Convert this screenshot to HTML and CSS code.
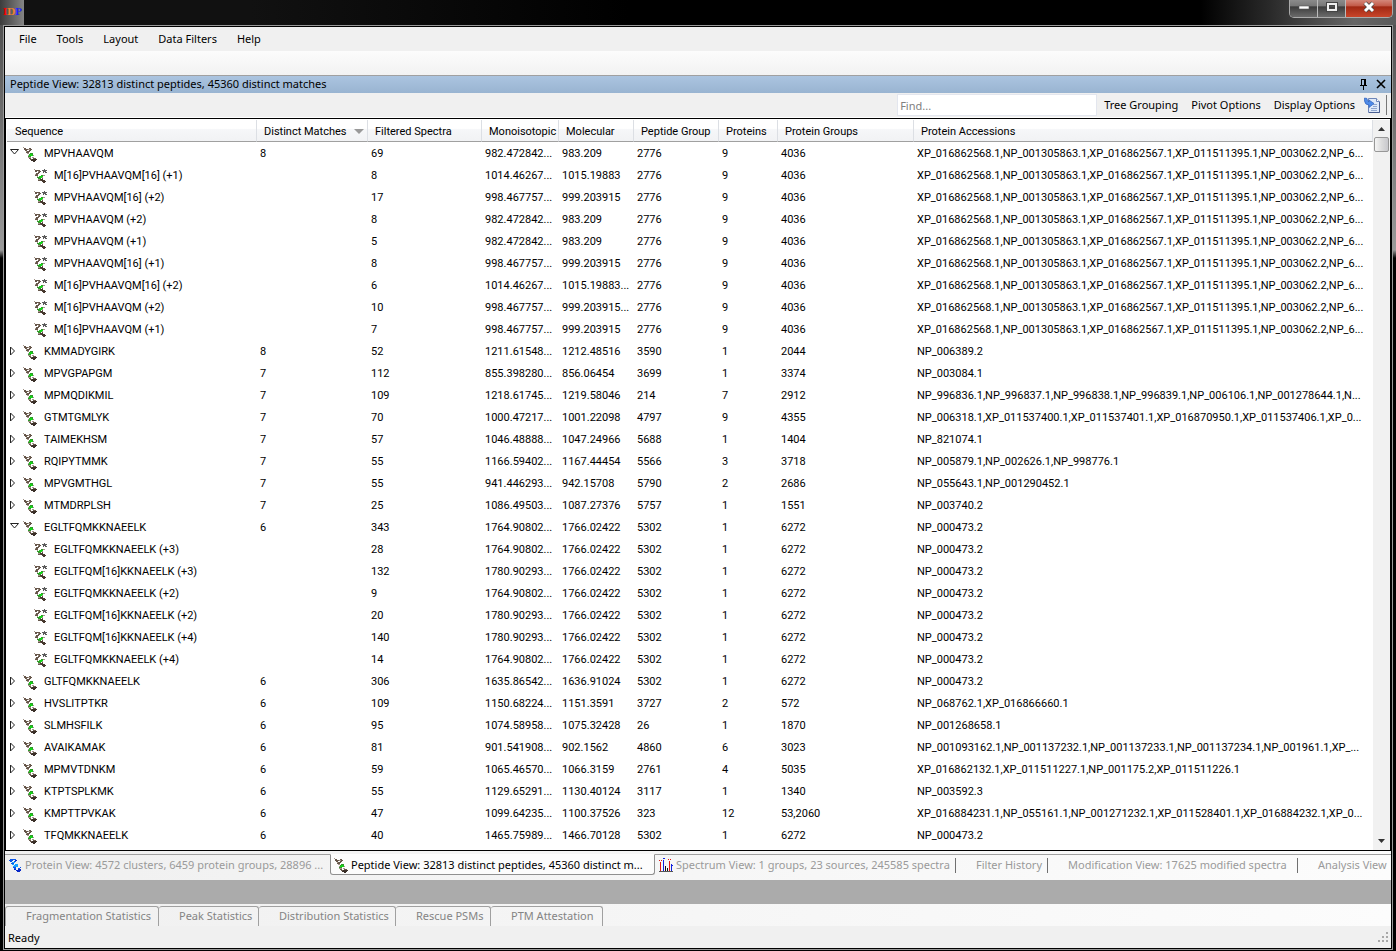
FILE: index.html
```
<!DOCTYPE html>
<html lang="en">
<head>
<meta charset="utf-8">
<title>IDPicker</title>
<link rel="stylesheet" href="styles.css">
</head>
<body>
<svg class="defs" aria-hidden="true">
  <symbol id="peptide" viewBox="0 0 15 16">
    <path d="M0 1.500h1M5 3.500h2M3 5.500h1M4 7.500h2M5 9.500h1M10 9.500h1M5 11.500h3M9 11.500h2" stroke="#a3968a"/>
    <path d="M1 2.500h2M6 2.500h2M1 3.500h4M7 3.500h2M2 4.500h2M6 4.500h2M4 5.500h3M3 6.500h3M6 12.500h2M10 12.500h3M7 13.500h2" stroke="#66564a"/>
    <path d="M7 7.500h3M6 8.500h4M5 10.500h3" stroke="#2f9a28"/>
    <path d="M7 8.500h2M6 9.500h4" stroke="#16d41a"/>
    <path d="M9 13.500h5M8 14.500h5M10 15.500h2" stroke="#3a2f28"/>
  </symbol>
  <symbol id="match" viewBox="0 0 16 16">
    <path d="M1 1.500h1M5 3.500h2M2 6.500h1M4 8.500h1M10 7.500h2M9 9.500h1M5 11.500h2" stroke="#a3968a"/>
    <path d="M2 2.500h5M2 3.500h2M6 3.500h2M5 4.500h2M3 5.500h3M2 7.500h3M3 6.500h2M5 12.500h3M9 10.500h1" stroke="#66564a"/>
    <path d="M8 7.500h2M4 9.500h3M5 10.500h3" stroke="#2f9a28"/>
    <path d="M6 8.500h4M7 9.500h2" stroke="#16d41a"/>
    <path d="M7 11.500h3M8 12.500h4M9 13.500h4M10 14.500h2" stroke="#46382e"/>
    <path d="M11 1.500h1M9 2.500h5M10 3.500h3M10 4.500h1M12 4.500h2" stroke="#5c5c5c"/>
  </symbol>
  <symbol id="protein" viewBox="0 0 15 16">
    <path d="M2 2.500h6M1 3.500h4M6 4.500h2M2 4.500h2M3 6.500h3M5 10.500h3M6 11.500h2M10 11.500h2M12 10.500h1" stroke="#0a55e8"/>
    <path d="M4 5.500h3M4 7.500h2M7 7.500h3M6 8.500h4M5 9.500h5" stroke="#18a0ff"/>
    <path d="M7 3.500h2M10 12.500h3M8 13.500h5M9 14.500h3M6 12.500h2" stroke="#0828c8"/>
  </symbol>
  <symbol id="spectrum" viewBox="0 0 15 16">
    <path d="M0 14.500h14" stroke="#555"/>
    <path d="M1.500 5v9M10.500 4v10" stroke="#e01818"/>
    <path d="M4.500 3v11M12.500 7v7" stroke="#1020e0"/>
    <path d="M6.500 9v5M8.500 11v3" stroke="#111"/>
    <path d="M0 3.500h3M9 2.500h3" stroke="#e01818" stroke-dasharray="1 1"/>
    <path d="M4 1.500h2M12 8.500h2" stroke="#1020e0"/>
  </symbol>
  <symbol id="open" viewBox="0 0 10 12">
    <path d="M.5 1.500h8L4.500 6z" fill="#fff" stroke="#222"/>
  </symbol>
  <symbol id="closed" viewBox="0 0 10 12">
    <path d="M.5 1v8L4.500 5z" fill="#fff" stroke="#222"/>
  </symbol>
</svg>

<div class="window">
  <header class="titlebar">
    <span class="logo"><b class="i">I</b><b class="d">D</b><b class="p">P</b></span>
    <div class="controls">
      <button class="control" aria-label="Minimize"><svg width="12" height="5"><rect x="1" y="1" width="10" height="3" fill="#fff" stroke="#555" stroke-width=".6"/></svg></button>
      <button class="control" aria-label="Restore"><svg width="12" height="10"><path d="M2 2h8v6H2z" fill="none" stroke="#444" stroke-width="4"/><path d="M2 2h8v6H2z" fill="none" stroke="#eee" stroke-width="2"/></svg></button>
      <button class="control close" aria-label="Close"><svg width="14" height="12"><path d="M3 2l8 8M11 2l-8 8" stroke="#444" stroke-width="4.500"/><path d="M3 2l8 8M11 2l-8 8" stroke="#fff" stroke-width="3"/></svg></button>
    </div>
  </header>

  <div class="client">
    <nav class="menubar">
      <button>File</button><button>Tools</button><button>Layout</button><button>Data Filters</button><button>Help</button>
    </nav>
    <div class="toolstrip"></div>

    <section class="pane">
      <div class="caption">
        <h1>Peptide View: 32813 distinct peptides, 45360 distinct matches</h1>
        <button aria-label="Auto hide"><svg width="9" height="12"><path d="M2.500 1v6M5.500 1v6M6.500 1v6M2 1.500h5M1 7.500h7M4.500 8v4" fill="none" stroke="#000"/></svg></button>
        <button aria-label="Close pane"><svg width="10" height="10"><path d="M1 1l8 8M9 1l-8 8" stroke="#000" stroke-width="1.600"/></svg></button>
      </div>
      <div class="pane-tools">
        <input class="find" type="text" placeholder="Find..." aria-label="Find">
        <button>Tree Grouping</button>
        <button>Pivot Options</button>
        <button>Display Options</button>
        <button class="export" aria-label="Export"><svg width="17" height="17" viewBox="0 0 17 17"><path d="M4.500 1.500h8l3 3v11h-11z" fill="#dfe9f8" stroke="#6e86b8"/><path d="M12.500 1.500v3h3" fill="#fff" stroke="#6e86b8"/><path d="M15.500 5v10.500H5" fill="none" stroke="#4a5f92"/><path d="M9 7.500h4M9 9.500h4M7 11.500h6M7 13.500h6" stroke="#8fa6cf"/><path d="M.5 1v3q.5 4 4.500 4v2.500L10 6.500 5 3v2Q3 4.500 3 1.500z" fill="#4f8be8" stroke="#2e62bd" stroke-width=".7"/></svg></button>
        <span class="tool-end"></span>
      </div>

      <div class="list">
        <table class="grid">
          <colgroup><col class="c-seq"><col class="c-dm"><col class="c-fs"><col class="c-mono"><col class="c-mol"><col class="c-pg"><col class="c-pr"><col class="c-prg"><col></colgroup>
          <thead>
            <tr>
              <th>Sequence</th>
              <th><span class="sorted">Distinct Matches<svg width="10" height="6"><path d="M0 0h10L5 5z" fill="#999"/></svg></span></th>
              <th>Filtered Spectra</th>
              <th>Monoisotopic</th>
              <th>Molecular</th>
              <th>Peptide Group</th>
              <th>Proteins</th>
              <th>Protein Groups</th>
              <th>Protein Accessions</th>
            </tr>
          </thead>
          <tbody id="rows"></tbody>
        </table>
        <div class="scrollbar">
          <button aria-label="Scroll up"><svg width="9" height="5"><path d="M1 5l3.500-4L8 5z" fill="#333"/></svg></button>
          <div class="thumb"></div>
          <button class="down" aria-label="Scroll down"><svg width="9" height="5"><path d="M1 0l3.500 4L8 0z" fill="#333"/></svg></button>
        </div>
      </div>
    </section>

    <nav class="doc-tabs">
      <button class="tab t-wide"><svg width="15" height="16"><use href="#protein"/></svg>Protein View: 4572 clusters, 6459 protein groups, 28896 ...</button>
      <button class="tab t-wide active"><svg width="15" height="16"><use href="#peptide"/></svg>Peptide View: 32813 distinct peptides, 45360 distinct m...</button>
      <button class="tab t-spec divided"><svg width="15" height="16"><use href="#spectrum"/></svg>Spectrum View: 1 groups, 23 sources, 245585 spectra</button>
      <button class="tab t-hist divided plain">Filter History</button>
      <button class="tab t-mod divided plain">Modification View: 17625 modified spectra</button>
      <button class="tab t-rest plain">Analysis View</button>
    </nav>

    <div class="splitter"></div>

    <nav class="dock-tabs">
      <button class="d1">Fragmentation Statistics</button><button class="d2">Peak Statistics</button><button class="d3">Distribution Statistics</button><button class="d4">Rescue PSMs</button><button class="d5">PTM Attestation</button>
    </nav>

    <footer class="status">
      <span>Ready</span>
      <svg width="12" height="12" fill="#a8a8a8"><path d="M8 0h2v2h-2zM4 4h2v2h-2zM8 4h2v2h-2zM0 8h2v2h-2zM4 8h2v2h-2zM8 8h2v2h-2z"/></svg>
    </footer>
  </div>
</div>
<script src="app.js"></script>
</body>
</html>
```
FILE: styles.css
```
* { box-sizing: border-box; }

body {
  margin: 0;
  background: #000;
  color: #000;
  font: 11px/16px "Noto Sans", "Open Sans", sans-serif;
}

button {
  margin: 0;
  padding: 0;
  border: 0;
  background: none;
  color: inherit;
  font: inherit;
  white-space: nowrap;
}

svg { display: block; flex: none; }
.defs { position: absolute; width: 0; height: 0; }

.window {
  display: flex;
  flex-direction: column;
  min-height: 100vh;
  padding: 0 3px 1px;
  background: linear-gradient(#4a4a4a, #5c5c5c 60px, #9a9a9a 250px, #000 258px);
}

/* Title bar */
.titlebar {
  display: flex;
  justify-content: space-between;
  height: 25px;
  margin: 0 -3px;
  background: linear-gradient(90deg, #111 18%, #000 45%, #000 86%, #2a2a2a 91%, #666 97%, #5a5a5a);
}
.logo {
  width: 24px;
  padding-left: 3px;
  background: linear-gradient(90deg, #3c3c3c, #858585);
  font: bold 11px/23px "Liberation Serif", serif;
}
.i { color: #f00; }
.d { color: #f08030; }
.p { color: #22f; }
.controls {
  display: flex;
  height: 18px;
  margin-right: 3px;
  border: 1px solid #aaa;
  border-top: 0;
  border-radius: 0 0 5px 5px;
  overflow: hidden;
}
.control {
  display: flex;
  align-items: center;
  justify-content: center;
  width: 28px;
  padding-bottom: 3px;
  border-right: 1px solid #bbb;
  background: linear-gradient(#8b8b8b, #777 35%, #3c3c3c 40%, #6b6b6b);
}
.control.close {
  width: 46px;
  border: 0;
  background: linear-gradient(#d4877a, #c25a48 35%, #a02813 40%, #c8452a);
}

.client {
  display: flex;
  flex: 1;
  flex-direction: column;
  min-width: 0;
  border: 1px solid #000;
  outline: 1px solid #999;
  margin: 1px;
  background: #f0f0f0;
}

.menubar {
  display: flex;
  gap: 20px;
  height: 24px;
  padding-left: 14px;
}
.toolstrip {
  height: 25px;
  border-bottom: 1px solid #a0a0a0;
  background: linear-gradient(#fcfcfc, #f2f2f2);
}

/* Pane */
.pane { display: flex; flex: 1; flex-direction: column; }
.caption {
  display: flex;
  align-items: center;
  gap: 8px;
  height: 17px;
  padding: 0 5px 2px;
  background: linear-gradient(#abc4e0, #99b4d1);
}
.caption h1 { flex: 1; margin: 0; font-size: 11px; font-weight: 400; }
.pane-tools {
  display: flex;
  align-items: center;
  justify-content: flex-end;
  gap: 13px;
  height: 25px;
  padding-right: 4px;
  border-bottom: 1px solid #fff;
}
.find {
  width: 200px;
  height: 22px;
  margin-right: -6px;
  padding: 0 2px;
  border: 1px solid #e3e6ee;
  background: #fff;
  font: inherit;
}
.find::placeholder { color: #808080; opacity: 1; }
.export { margin: 0 -8px 0 -4px; }
.tool-end { width: 1px; height: 20px; background: #777; }

.list {
  display: flex;
  flex: 1;
  align-items: stretch;
  border: 1px solid #000;
  padding: 1px 0 0 1px;
  background: #fff;
}
.grid {
  flex: 1;
  align-self: flex-start;
  width: 100%;
  min-width: 0;
  border-collapse: separate;
  border-spacing: 0;
  table-layout: fixed;
  font: 11px/16px Roboto, "Liberation Sans", sans-serif;
}
.c-seq { width: 250px; }
.c-dm { width: 111px; }
.c-fs { width: 114px; }
.c-mono { width: 77px; }
.c-mol { width: 75px; }
.c-pg { width: 85px; }
.c-pr { width: 59px; }
.c-prg { width: 136px; }
th {
  height: 22px;
  padding: 2px 0 0 7px;
  border-right: 1px solid #dcdfe4;
  border-bottom: 1px solid #a0a0a0;
  background: linear-gradient(#fff 40%, #f6f7f9 45%, #f1f2f4);
  font-weight: 400;
  text-align: left;
  white-space: nowrap;
}
th:first-child { padding-left: 8px; }
.sorted {
  display: flex;
  align-items: center;
  justify-content: space-between;
  padding-right: 3px;
}
td {
  height: 22px;
  padding: 2px 6px 0 3px;
  overflow: hidden;
  white-space: nowrap;
}
td:last-child { padding-right: 0; }
.seq { display: flex; align-items: center; }
.toggle { width: 10px; margin-right: 3px; }
.seq svg.glyph { margin-right: 6px; }
.seq.child { padding-left: 23px; }
.seq.child svg.glyph { margin-right: 5px; }

.scrollbar {
  display: flex;
  flex: none;
  flex-direction: column;
  align-items: center;
  width: 17px;
  background: #f1f1f1;
}
.scrollbar button {
  display: flex;
  align-items: center;
  justify-content: center;
  width: 17px;
  height: 17px;
}
.thumb {
  width: 15px;
  height: 15px;
  border: 1px solid #979797;
  border-radius: 2px;
  background: linear-gradient(90deg, #f5f5f5, #dcdcdc 50%, #c8c8cc);
}
.scrollbar .down { margin-top: auto; }

/* Document tabs */
.doc-tabs {
  display: flex;
  height: 29px;
  padding-top: 3px;
  background: linear-gradient(90deg, #f0f0f0, #fcfcfc);
  overflow: hidden;
}
.tab {
  display: flex;
  flex: none;
  align-items: center;
  gap: 2px;
  height: 21px;
  padding-left: 3px;
  border-top: 1px solid #a0a0a0;
  color: #9a9a9a;
  text-align: left;
  overflow: hidden;
}
.tab.t-wide { width: 325px; }
.tab.t-spec { width: 301px; padding-left: 4px; }
.tab.t-hist { width: 92px; }
.tab.t-mod { width: 250px; }
.tab.t-rest { flex: 1 0 0; }
.tab.plain { padding-left: 20px; }
.divided { position: relative; }
.divided::after {
  content: "";
  position: absolute;
  top: 3px;
  right: 0;
  width: 1px;
  height: 15px;
  background: #707070;
}
.tab.active {
  border: 1px solid #909090;
  border-top-color: #fcfcfc;
  border-radius: 0 0 3px 3px;
  background: #fcfcfc;
  color: #000;
}

.splitter { height: 24px; background: #ababab; }

.dock-tabs {
  display: flex;
  height: 22px;
  padding-top: 2px;
  background: linear-gradient(90deg, #f0f0f0, #fcfcfc);
}
.dock-tabs button {
  padding: 0 0 2px 20px;
  border: 1px solid #a0a0a0;
  border-width: 1px 1px 0 0;
  border-radius: 3px 3px 0 0;
  color: #848484;
  text-align: left;
}
.dock-tabs .d1 { width: 154px; border-left-width: 1px; }
.d2 { width: 100px; }
.d3 { width: 137px; }
.d4 { width: 95px; }
.d5 { width: 112px; }

.status {
  display: flex;
  align-items: center;
  justify-content: space-between;
  height: 22px;
  padding: 2px 1px 0 3px;
}
```
FILE: app.js
```
const XP = 'XP_016862568.1,NP_001305863.1,XP_016862567.1,XP_011511395.1,NP_003062.2,NP_6...';
const EG = ['5302', '1', '6272', 'NP_000473.2'];
const MP = ['2776', '9', '4036', XP];

// kind: "o" expanded peptide, "c" collapsed peptide, "m" distinct match
const data = [
  ['o', 'MPVHAAVQM', '8', '69', '982.472842...', '983.209', ...MP],
  ['m', 'M[16]PVHAAVQM[16] (+1)', '', '8', '1014.46267...', '1015.19883', ...MP],
  ['m', 'MPVHAAVQM[16] (+2)', '', '17', '998.467757...', '999.203915', ...MP],
  ['m', 'MPVHAAVQM (+2)', '', '8', '982.472842...', '983.209', ...MP],
  ['m', 'MPVHAAVQM (+1)', '', '5', '982.472842...', '983.209', ...MP],
  ['m', 'MPVHAAVQM[16] (+1)', '', '8', '998.467757...', '999.203915', ...MP],
  ['m', 'M[16]PVHAAVQM[16] (+2)', '', '6', '1014.46267...', '1015.19883...', ...MP],
  ['m', 'M[16]PVHAAVQM (+2)', '', '10', '998.467757...', '999.203915...', ...MP],
  ['m', 'M[16]PVHAAVQM (+1)', '', '7', '998.467757...', '999.203915', ...MP],
  ['c', 'KMMADYGIRK', '8', '52', '1211.61548...', '1212.48516', '3590', '1', '2044', 'NP_006389.2'],
  ['c', 'MPVGPAPGM', '7', '112', '855.398280...', '856.06454', '3699', '1', '3374', 'NP_003084.1'],
  ['c', 'MPMQDIKMIL', '7', '109', '1218.61745...', '1219.58046', '214', '7', '2912', 'NP_996836.1,NP_996837.1,NP_996838.1,NP_996839.1,NP_006106.1,NP_001278644.1,N...'],
  ['c', 'GTMTGMLYK', '7', '70', '1000.47217...', '1001.22098', '4797', '9', '4355', 'NP_006318.1,XP_011537400.1,XP_011537401.1,XP_016870950.1,XP_011537406.1,XP_0...'],
  ['c', 'TAIMEKHSM', '7', '57', '1046.48888...', '1047.24966', '5688', '1', '1404', 'NP_821074.1'],
  ['c', 'RQIPYTMMK', '7', '55', '1166.59402...', '1167.44454', '5566', '3', '3718', 'NP_005879.1,NP_002626.1,NP_998776.1'],
  ['c', 'MPVGMTHGL', '7', '55', '941.446293...', '942.15708', '5790', '2', '2686', 'NP_055643.1,NP_001290452.1'],
  ['c', 'MTMDRPLSH', '7', '25', '1086.49503...', '1087.27376', '5757', '1', '1551', 'NP_003740.2'],
  ['o', 'EGLTFQMKKNAEELK', '6', '343', '1764.90802...', '1766.02422', ...EG],
  ['m', 'EGLTFQMKKNAEELK (+3)', '', '28', '1764.90802...', '1766.02422', ...EG],
  ['m', 'EGLTFQM[16]KKNAEELK (+3)', '', '132', '1780.90293...', '1766.02422', ...EG],
  ['m', 'EGLTFQMKKNAEELK (+2)', '', '9', '1764.90802...', '1766.02422', ...EG],
  ['m', 'EGLTFQM[16]KKNAEELK (+2)', '', '20', '1780.90293...', '1766.02422', ...EG],
  ['m', 'EGLTFQM[16]KKNAEELK (+4)', '', '140', '1780.90293...', '1766.02422', ...EG],
  ['m', 'EGLTFQMKKNAEELK (+4)', '', '14', '1764.90802...', '1766.02422', ...EG],
  ['c', 'GLTFQMKKNAEELK', '6', '306', '1635.86542...', '1636.91024', ...EG],
  ['c', 'HVSLITPTKR', '6', '109', '1150.68224...', '1151.3591', '3727', '2', '572', 'NP_068762.1,XP_016866660.1'],
  ['c', 'SLMHSFILK', '6', '95', '1074.58958...', '1075.32428', '26', '1', '1870', 'NP_001268658.1'],
  ['c', 'AVAIKAMAK', '6', '81', '901.541908...', '902.1562', '4860', '6', '3023', 'NP_001093162.1,NP_001137232.1,NP_001137233.1,NP_001137234.1,NP_001961.1,XP_...'],
  ['c', 'MPMVTDNKM', '6', '59', '1065.46570...', '1066.3159', '2761', '4', '5035', 'XP_016862132.1,XP_011511227.1,NP_001175.2,XP_011511226.1'],
  ['c', 'KTPTSPLKMK', '6', '55', '1129.65291...', '1130.40124', '3117', '1', '1340', 'NP_003592.3'],
  ['c', 'KMPTTPVKAK', '6', '47', '1099.64235...', '1100.37526', '323', '12', '53,2060', 'XP_016884231.1,NP_055161.1,NP_001271232.1,XP_011528401.1,XP_016884232.1,XP_0...'],
  ['c', 'TFQMKKNAEELK', '6', '40', '1465.75989...', '1466.70128', ...EG],
];

const icon = (id, w, h, cls) => `<svg class="${cls}" width="${w}" height="${h}"><use href="#${id}"/></svg>`;

document.getElementById('rows').innerHTML = data.map(([kind, name, ...cells]) => {
  const lead = kind === 'm'
    ? icon('match', 16, 16, 'glyph')
    : `<button class="toggle" aria-label="${kind === 'o' ? 'Collapse' : 'Expand'} ${name}">${icon(kind === 'o' ? 'open' : 'closed', 10, 12, '')}</button>${icon('peptide', 15, 16, 'glyph')}`;
  return `<tr><td><div class="seq${kind === 'm' ? ' child' : ''}">${lead}${name}</div></td>${cells.map(c => `<td>${c}</td>`).join('')}</tr>`;
}).join('');
```
